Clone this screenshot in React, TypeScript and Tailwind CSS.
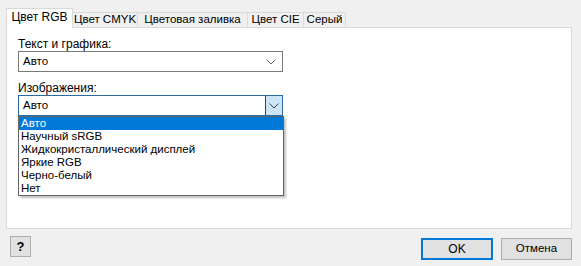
import React from 'react';

const font = { fontFamily: '"Liberation Sans", Arial, sans-serif' };

const Chevron: React.FC<{ color?: string }> = ({ color = '#606060' }) => (
  <svg width="10" height="6" viewBox="0 0 10 6" fill="none">
    <path d="M0.5 0.5 L5 5 L9.5 0.5" stroke={color} strokeWidth="1" />
  </svg>
);

const options = ['Авто', 'Научный sRGB', 'Жидкокристаллический дисплей', 'Яркие RGB', 'Черно-белый', 'Нет'];

const tabs = [
  { label: 'Цвет CMYK', w: 'w-[65px]' },
  { label: 'Цветовая заливка', w: 'w-[110px]' },
  { label: 'Цвет CIE', w: 'w-[56px]' },
  { label: 'Серый', w: 'w-[42px]' },
];

export default function App() {
  return (
    <div
      className="w-[581px] h-[266px] bg-[#f0f0f0] pt-[8px] pl-[6px] pr-[9px] text-[11.5px] text-black flex flex-col overflow-hidden"
      style={font}
    >
      {/* tab strip */}
      <div className="flex items-end h-[19px]">
        <div className="relative z-10 w-[67px] h-[20px] -mb-px bg-white border border-b-0 border-[#d9d9d9] flex items-center justify-center pb-[3px] leading-none whitespace-nowrap text-[12px]">
          Цвет RGB
        </div>
        {tabs.map((t) => (
          <div
            key={t.label}
            className={`${t.w} shrink-0 h-[15px] bg-[#f0f0f0] border-t border-r border-[#d9d9d9] flex items-center justify-center leading-none whitespace-nowrap`}
          >
            {t.label}
          </div>
        ))}
      </div>

      {/* panel */}
      <div className="relative h-[202px] bg-white border border-[#d9d9d9] pt-[9px] pl-[11px]">
        <div className="h-[14px] leading-[14px] text-[12px]">Текст и графика:</div>
        <div className="w-[265px] h-[21px] border border-[#7a7a7a] bg-white flex items-center justify-between pl-[4px] pr-[6px]">
          <span>Авто</span>
          <Chevron />
        </div>

        <div className="h-[14px] leading-[14px] mt-[9px] text-[12px]">Изображения:</div>
        <div className="relative w-[265px]">
          <div className="h-[21px] border border-[#2b6aa0] bg-white flex items-center justify-between pl-[4px]">
            <span>Авто</span>
            <div className="w-[17px] h-[19px] bg-[#cce4f7] border-l border-[#005499] flex items-center justify-center">
              <Chevron color="#404040" />
            </div>
          </div>
          {/* dropdown list */}
          <div className="absolute left-0 top-[21px] w-[266px] bg-white border border-[#646464] shadow-[2px_2px_2px_rgba(0,0,0,0.25)] z-20">
            {options.map((o, i) => (
              <div
                key={o}
                className={`h-[13px] leading-[13px] pl-[2px] ${i === 0 ? 'bg-[#0078d7] text-white' : ''}`}
              >
                {o}
              </div>
            ))}
          </div>
        </div>
      </div>

      {/* buttons */}
      <div className="flex items-start pl-[4px]">
        <button className="mt-[7px] w-[21px] h-[21px] bg-[#e1e1e1] border border-[#adadad] font-bold text-[13px] leading-none flex items-center justify-center">
          ?
        </button>
        <button className="ml-auto mt-[9px] w-[72px] h-[22px] bg-[#e1e1e1] border-2 border-[#0078d7] flex items-center justify-center text-[12px]">
          OK
        </button>
        <button className="ml-[8px] mt-[9px] w-[71px] h-[22px] bg-[#e1e1e1] border border-[#adadad] flex items-center justify-center">
          Отмена
        </button>
      </div>
    </div>
  );
}
